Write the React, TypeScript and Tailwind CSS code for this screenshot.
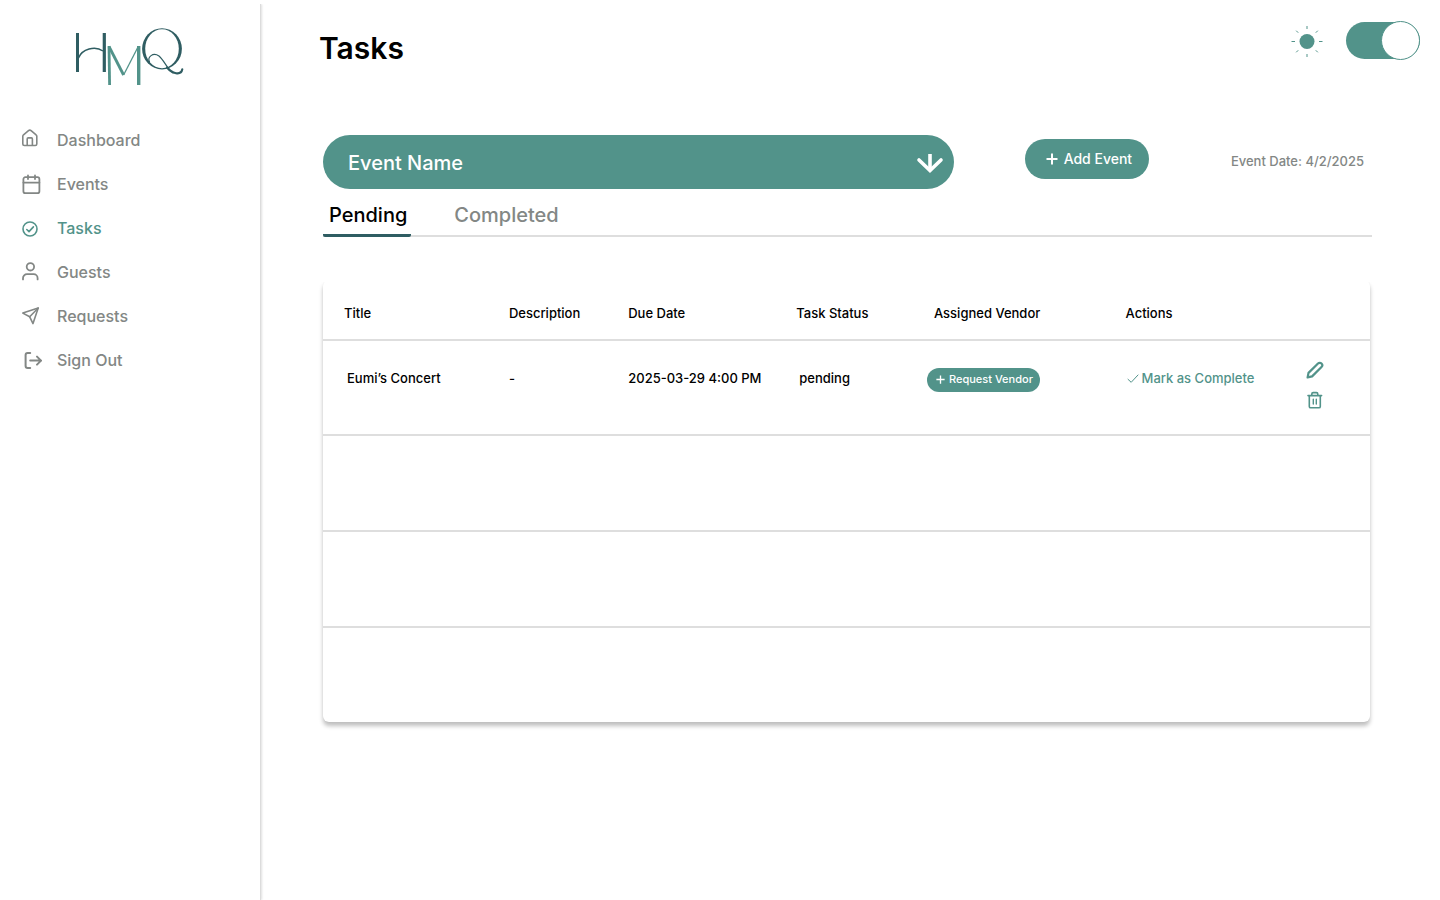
import { useState } from "react";
import type { ReactNode } from "react";

function Logo() {
  return (
    <svg width="110" height="60" viewBox="75 27 110 60" role="img" aria-label="HMQ" fill="none">
      <g stroke="#2f5d62">
        <line x1="77.5" y1="33" x2="77.5" y2="72" strokeWidth="3" />
        <line x1="104.3" y1="33" x2="104.3" y2="72" strokeWidth="3.2" />
        <path d="M78.5 58C82 49 95 45.5 103 51" strokeWidth="1.5" />
      </g>
      <g stroke="#52938a">
        <line x1="109" y1="46" x2="109.6" y2="85" strokeWidth="2.8" />
        <line x1="109" y1="46.5" x2="123.6" y2="75" strokeWidth="2.8" />
        <line x1="138" y1="47" x2="123.6" y2="75" strokeWidth="1.3" />
        <line x1="138.7" y1="46" x2="138.7" y2="85" strokeWidth="3.4" />
      </g>
      <ellipse cx="162" cy="48.8" rx="19.9" ry="20.6" fill="#2f5d62" />
      <ellipse cx="162" cy="48.8" rx="16.8" ry="19.5" fill="#fff" />
      <g stroke="#2f5d62" strokeLinecap="round">
        <path d="M149.5 62C147 57 153 52 159 56C164 60 167 69 173 73" strokeWidth="1.2" />
        <path d="M167 67.5C172 73.5 181 76 182.3 69.3" strokeWidth="2.1" />
      </g>
    </svg>
  );
}

function Icon({ children, w = 2 }: { children: ReactNode; w?: number }) {
  return (
    <svg
      width="24"
      height="24"
      viewBox="0 0 24 24"
      fill="none"
      stroke="currentColor"
      strokeWidth={w}
      strokeLinecap="round"
      strokeLinejoin="round"
      aria-hidden="true"
    >
      {children}
    </svg>
  );
}

const nav = [
  {
    name: "Dashboard",
    icon: (
      <Icon w={1.6}>
        <path d="M4.8 8.3c0-.6.3-1.1.7-1.5l5-4.2a2 2 0 0 1 2.6 0l5 4.2c.5.4.7.9.7 1.5v7.6a1.6 1.6 0 0 1-1.6 1.6H6.4a1.6 1.6 0 0 1-1.6-1.6z" />
        <path d="M9.2 17.3v-6.4c0-.6.4-1 1-1h3.2c.6 0 1 .4 1 1v6.4" />
      </Icon>
    ),
  },
  {
    name: "Events",
    icon: (
      <Icon w={1.8}>
        <rect x="5.4" y="5.2" width="16" height="16" rx="2" />
        <path d="M5.4 10.6h16M10 3.4v3.6M17 3.4v3.6" />
      </Icon>
    ),
  },
  {
    name: "Tasks",
    icon: (
      <Icon w={1.6}>
        <circle cx="12" cy="13" r="7" />
        <path d="M8.8 13.5l2.2 2.1 4.4-4.7" />
      </Icon>
    ),
  },
  {
    name: "Guests",
    icon: (
      <Icon w={1.8}>
        <circle cx="12.4" cy="6.8" r="3.7" />
        <path d="M5 19.4v-1.2a4 4 0 0 1 4-4h6.6a4 4 0 0 1 4 4v1.2" />
      </Icon>
    ),
  },
  {
    name: "Requests",
    icon: (
      <Icon w={1.6}>
        <path d="M20.2 4L4.8 9.1l6.9 3.7 3.3 6.8z" />
        <path d="M20.2 4l-8.5 8.8" />
      </Icon>
    ),
  },
  {
    name: "Sign Out",
    icon: (
      <Icon w={2}>
        <path d="M12.2 5H9.6a2 2 0 0 0-2 2v11a2 2 0 0 0 2 2h2.6" />
        <path d="M12.2 12.6h11M19 8.6l4 4-4 4" />
      </Icon>
    ),
  },
];

function Plus({ size, w }: { size: number; w: number }) {
  return (
    <svg width={size} height={size} viewBox="0 0 12 12" stroke="currentColor" strokeWidth={w} aria-hidden="true">
      <path d="M6 .5v11M.5 6h11" />
    </svg>
  );
}

export default function App() {
  const [light, setLight] = useState(true);
  const [tab, setTab] = useState("Pending");

  return (
    <div className="flex min-h-screen bg-white font-['Inter','Liberation_Sans',sans-serif] text-black">
      <aside className="mt-1 w-[261px] shrink-0 border-r border-[#dcdcdc] shadow-[1px_0_2px_rgba(0,0,0,0.12)] [clip-path:inset(0_-4px_0_0)]">
        <div className="flex justify-center pt-[23px]">
          <Logo />
        </div>
        <nav className="mt-[41px] flex flex-col gap-5 pl-[18px]">
          {nav.map((item) => (
            <a
              key={item.name}
              href={"#" + item.name.toLowerCase().replace(" ", "-")}
              aria-current={item.name === "Tasks" ? "page" : undefined}
              className={
                "flex items-center gap-[15px] text-base font-medium " +
                (item.name === "Tasks" ? "text-[#52938a]" : "text-[#838785]")
              }
            >
              {item.icon}
              {item.name}
            </a>
          ))}
        </nav>
      </aside>

      <main className="min-w-0 flex-1">
        <header className="flex items-start justify-between pt-[22px] pr-5 pl-[58px]">
          <h1 className="pt-[6px] text-3xl leading-10 font-semibold">Tasks</h1>
          <div className="flex items-center gap-[22px]">
            <svg width="34" height="34" viewBox="0 0 34 34" stroke="#52938a" aria-hidden="true">
              <circle cx="17" cy="17.5" r="7.5" fill="#52938a" stroke="none" />
              <path d="M17 2v3M17 30v3M1.5 17.5h3.5M29 17.5h3.5M6.2 6.7l2 2M25.8 26.3l2 2M6.2 28.3l2-2M25.8 8.7l2-2" />
            </svg>
            <input
              type="checkbox"
              role="switch"
              aria-label="Light theme"
              checked={light}
              onChange={(e) => setLight(e.target.checked)}
              className="flex h-[37px] w-[74px] cursor-pointer appearance-none items-center justify-start rounded-full bg-[#52938a] before:size-[39px] before:shrink-0 before:rounded-full before:border before:border-[#52938a] before:bg-white checked:justify-end"
            />
          </div>
        </header>

        <div className="pt-[67px] pr-[70px] pl-[62px]">
          <div className="flex items-center">
            <div className="relative flex-1">
              <select
                aria-label="Event"
                className="block h-[54px] w-full appearance-none rounded-full bg-[#52938a] pt-[2px] pl-[25px] text-xl font-medium text-white"
              >
                <option>Event Name</option>
              </select>
              <svg
                className="pointer-events-none absolute top-[17px] right-[10px]"
                width="28"
                height="24"
                viewBox="0 0 28 24"
                fill="none"
                stroke="#fff"
                strokeWidth="3.6"
                aria-hidden="true"
              >
                <path d="M14 2v17" />
                <path d="M3 8l11 10.5L25 8" strokeLinecap="round" />
              </svg>
            </div>
            <button className="mr-[82px] mb-[6px] ml-[71px] flex h-10 w-[124px] items-center justify-center gap-[6px] rounded-full bg-[#52938a] pl-1 text-sm font-medium text-white">
              <Plus size={12} w={2} />
              Add Event
            </button>
            <p className="mr-[6px] text-[13px] font-medium text-[#838785]">Event Date: 4/2/2025</p>
          </div>

          <div role="tablist" className="mt-[10px] -mr-[2px] flex gap-10 border-b-2 border-[#dedede]">
            {["Pending", "Completed"].map((name) => (
              <button
                key={name}
                role="tab"
                aria-selected={tab === name}
                onClick={() => setTab(name)}
                className={
                  "-mb-[2px] border-b-[3px] pb-[3px] text-xl font-medium leading-[32px] " +
                  (tab === name
                    ? "rounded-xs border-[#2f5d62] pr-1 pl-[6px] text-black"
                    : "border-transparent px-[3px] text-[#838785]")
                }
              >
                {name}
              </button>
            ))}
          </div>

          <div className="mt-[43px] rounded-md shadow-[0_4px_4px_rgba(0,0,0,0.25),0_0_1px_rgba(0,0,0,0.08)] [clip-path:inset(2px_-8px_-10px_-8px)]">
            <table className="w-full table-fixed text-left text-[13px] font-medium">
              <colgroup>
                <col className="w-[15.75%]" />
                <col className="w-[11.4%]" />
                <col className="w-[16.05%]" />
                <col className="w-[13.15%]" />
                <col className="w-[18.3%]" />
                <col className="w-[17.4%]" />
                <col />
              </colgroup>
              <thead>
                <tr className="h-[60px] border-b-2 border-[#dedede]">
                  {["Title", "Description", "Due Date", "Task Status", "Assigned Vendor", "Actions"].map((h) => (
                    <th key={h} scope="col" className="pt-2 pl-[21px] font-medium">
                      {h}
                    </th>
                  ))}
                  <th aria-label="Edit or delete" />
                </tr>
              </thead>
              <tbody>
                <tr className="h-[95px] border-b-2 border-[#dedede]">
                  <td className="pb-[18px] pl-6">Eumi’s Concert</td>
                  <td className="pb-[18px] pl-[21px]">-</td>
                  <td className="pb-[18px] pl-[21px] whitespace-nowrap">2025-03-29 4:00 PM</td>
                  <td className="pb-[18px] pl-6">pending</td>
                  <td className="pb-4 pl-[14px]">
                    <button className="flex h-6 w-[113px] items-center justify-center gap-1 rounded-full bg-[#52938a] pl-[2px] text-[11px] font-medium whitespace-nowrap text-white">
                      <Plus size={9} w={1.8} />
                      Request Vendor
                    </button>
                  </td>
                  <td className="pb-[18px] pl-[22px]">
                    <button className="flex items-center gap-[3px] whitespace-nowrap text-[#52938a]">
                      <svg width="12" height="12" viewBox="0 0 12 12" fill="none" stroke="currentColor" aria-hidden="true">
                        <path d="M1 6.3l3.2 3L11 2" strokeLinecap="round" />
                      </svg>
                      Mark as Complete
                    </button>
                  </td>
                  <td className="pb-[6px] pl-[19px] text-[#52938a]">
                    <div className="flex flex-col gap-3">
                      <button aria-label="Edit task" className="w-[18px]">
                        <svg width="18" height="18" viewBox="0 0 18 18" fill="none" stroke="currentColor" strokeWidth="2.2" strokeLinejoin="round" aria-hidden="true">
                          <path d="M1.6 16.4l.9-4.5L12 2.5a2.4 2.4 0 0 1 3.5 3.5L6.1 15.4z" />
                        </svg>
                      </button>
                      <button aria-label="Delete task" className="w-[18px]">
                        <svg width="18" height="18" viewBox="0 0 18 18" fill="none" stroke="currentColor" strokeWidth="1.6" strokeLinecap="round" strokeLinejoin="round" aria-hidden="true">
                          <path d="M2 4.6h13.6M3.3 4.6v10.8c0 .8.6 1.4 1.4 1.4h8.2c.8 0 1.4-.6 1.4-1.4V4.6M5.8 4.4V3c0-.8.6-1.4 1.4-1.4h3.2c.8 0 1.4.6 1.4 1.4v1.4" />
                          <path d="M7.3 8.2v4.8M10.3 8.2v4.8" strokeWidth="1.4" />
                        </svg>
                      </button>
                    </div>
                  </td>
                </tr>
                <tr className="h-24 border-b-2 border-[#dedede]">
                  <td colSpan={7} />
                </tr>
                <tr className="h-24 border-b-2 border-[#dedede]">
                  <td colSpan={7} />
                </tr>
                <tr className="h-[95px]">
                  <td colSpan={7} />
                </tr>
              </tbody>
            </table>
          </div>
        </div>
      </main>
    </div>
  );
}
